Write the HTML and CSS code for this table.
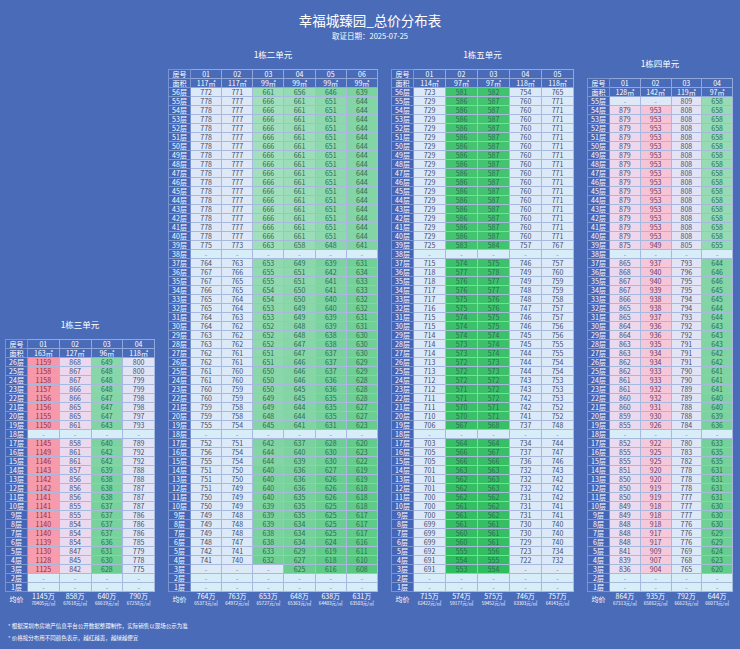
FILE: index.html
```html
<!DOCTYPE html>
<html lang="zh-CN">
<head>
<meta charset="utf-8">
<title>幸福城臻园_总价分布表</title>
<link rel="stylesheet" href="styles.css">
</head>
<body>
<header class="head">
  <h1 class="title">幸福城臻园_总价分布表</h1>
  <p class="date">取证日期：2025-07-25</p>
</header>
<main class="units" id="units"></main>
<footer class="notes">
  <p>* 根据深圳市房地产信息平台公开数据整理制作，实际销售以现场公示为准</p>
  <p>* 价格按分布用不同颜色表示，越红越贵，越绿越便宜</p>
</footer>
<script src="script.js"></script>
</body>
</html>
```

FILE: styles.css
```css
* { box-sizing: border-box; }
html, body { margin: 0; padding: 0; background: #4a6bb8; }
body {
  width: 740px;
  height: 649px;
  overflow: hidden;
  color: #fff;
  font-family: "Noto Sans CJK SC", "Noto Sans", sans-serif;
}
.head { padding-top: 10px; text-align: center; }
.title { margin: 0; font-size: 13.5px; line-height: 20px; font-weight: 400; }
.date { margin: 0; font-size: 7.5px; line-height: 12px; }

.units {
  display: flex;
  justify-content: space-between;
  align-items: flex-end;
  padding: 0 7px 0 5px;
  margin-top: 6px;
}
.unit-name {
  font-size: 8.5px;
  line-height: 13px;
  text-align: center;
  margin-bottom: 7.5px;
}
.grid {
  border-collapse: collapse;
  table-layout: fixed;
}
.u3 { width: 150px; }
.u2 { width: 210px; }
.u5 { width: 183px; }
.u4 { width: 146px; }
.grid col.lab-col { width: 22px; }

.grid tr { height: 9px; }
.grid td, .grid th {
  padding: 0;
  height: 9px;
  font-size: 7px;
  line-height: 8px;
  font-weight: normal;
  text-align: center;
  white-space: nowrap;
  overflow: hidden;
  border: 1px solid #a7b9dc;
  color: #434d6a;
}
.grid th.lab {
  background: #4566b6;
  color: #fff;
  border-color: #7a94cf;
}
.grid th.hd {
  background: #4a6bb8;
  color: #fff;
  border-color: #8fa7db;
}
.grid td.dash { color: #7b879e; }
.grid td.skip { background: #d7eef9; }
.grid td.empty { background: #dde9f7; }
.grid td.g { color: #2f6b52; }
.grid td.p { color: #5b3f68; }
.grid td.r { color: #9b2b3d; }

.grid tr.avg { height: 16.5px; }
.grid tr.avg th, .grid tr.avg td {
  height: 16.5px;
  background: #4a6bb8;
  color: #fff;
  border-color: #4a6bb8;
  border-top-color: #a7b9dc;
}
.avg .price { display: block; font-size: 7px; line-height: 8px; }
.avg .unit { display: block; font-size: 4.6px; line-height: 6px; }

.notes { padding: 12px 0 0 8px; }
.notes p { margin: 0; font-size: 5.5px; line-height: 12px; }
```

FILE: script.js
```js
(function () {
  var UNITS = [
    {
      name: '1栋三单元', cls: 'u3', top: 26,
      cols: ['01', '02', '03', '04'],
      areas: ['163㎡', '127㎡', '96㎡', '118㎡'],
      rows: [
        '26:1159 868 649 800', '25:1158 867 648 800', '24:1158 867 648 799',
        '23:1157 866 648 799', '22:1156 866 647 798', '21:1156 865 647 798',
        '20:1155 865 647 797', '19:1150 861 643 793', '18:-',
        '17:1145 858 640 789', '16:1149 861 642 792', '15:1146 861 642 792',
        '14:1143 857 639 788', '13:1142 856 638 788', '12:1142 856 638 787',
        '11:1141 856 638 787', '10:1141 855 637 787', '9:1141 855 637 786',
        '8:1140 854 637 786', '7:1140 854 637 786', '6:1139 854 636 785',
        '5:1130 847 631 779', '4:1128 845 630 778', '3:1125 842 628 775',
        '2:-', '1:-'
      ],
      avg: [['1145万', '70405元/㎡'], ['858万', '67618元/㎡'], ['640万', '66619元/㎡'], ['790万', '67258元/㎡']]
    },
    {
      name: '1栋二单元', cls: 'u2', top: 56,
      cols: ['01', '02', '03', '04', '05', '06'],
      areas: ['117㎡', '117㎡', '99㎡', '99㎡', '99㎡', '99㎡'],
      rows: [
        '56:772 771 661 656 646 639', '55-40:778 777 666 661 651 644',
        '39:775 773 663 658 648 641', '38:-',
        '37:764 763 653 649 639 631', '36:767 766 655 651 642 634',
        '35:767 765 655 651 641 633', '34:766 765 654 650 641 633',
        '33:765 764 654 650 640 632', '32:765 764 653 649 640 632',
        '31:764 763 653 649 639 631', '30:764 762 652 648 639 631',
        '29:763 762 652 648 638 630', '28:763 762 652 647 638 630',
        '27:762 761 651 647 637 630', '26:762 761 651 646 637 629',
        '25:761 760 650 646 637 629', '24:761 760 650 646 636 628',
        '23:760 759 650 645 636 628', '22:760 759 649 645 635 628',
        '21:759 758 649 644 635 627', '20:759 758 648 644 635 627',
        '19:755 754 645 641 631 623', '18:-',
        '17:752 751 642 637 628 620', '16:756 754 644 640 630 623',
        '15:755 754 644 639 630 622', '14:751 750 640 636 627 619',
        '13:751 750 640 636 626 619', '12:751 749 640 636 626 618',
        '11:750 749 640 635 626 618', '10:750 749 639 635 625 618',
        '9:749 748 639 635 625 617', '8:749 748 639 634 625 617',
        '7:749 748 638 634 625 617', '6:748 747 638 634 624 616',
        '5:742 741 633 629 619 611', '4:741 740 632 627 618 610',
        '3:- - - 625 616 608', '2:-', '1:-'
      ],
      avg: [['764万', '65373元/㎡'], ['763万', '64972元/㎡'], ['653万', '65727元/㎡'], ['648万', '65363元/㎡'], ['638万', '64403元/㎡'], ['631万', '63503元/㎡']]
    },
    {
      name: '1栋五单元', cls: 'u5', top: 56,
      cols: ['01', '02', '03', '04', '05'],
      areas: ['114㎡', '97㎡', '97㎡', '118㎡', '118㎡'],
      rows: [
        '56:723 581 582 754 765', '55-40:729 586 587 760 771',
        '39:725 583 584 757 767', '38:-',
        '37:715 574 575 746 757', '36:718 577 578 749 760',
        '35:718 576 577 749 759', '34:717 576 577 748 759',
        '33:717 575 576 748 758', '32:716 575 576 747 757',
        '31:715 574 575 746 757', '30:715 574 575 746 756',
        '29:714 574 574 745 756', '28:714 573 574 745 755',
        '27:714 573 574 744 755', '26:713 572 573 744 754',
        '25:713 572 573 744 754', '24:712 572 572 743 753',
        '23:712 571 572 743 753', '22:711 571 572 742 753',
        '21:711 570 571 742 752', '20:710 570 571 741 752',
        '19:706 567 568 737 748', '18:-',
        '17:703 564 564 734 744', '16:705 566 567 737 747',
        '15:705 566 566 736 746', '14:701 563 563 732 743',
        '13:701 562 563 732 742', '12:701 562 563 732 742',
        '11:700 562 562 731 742', '10:700 561 562 731 741',
        '9:700 561 562 731 741', '8:699 561 561 730 740',
        '7:699 560 561 730 740', '6:699 560 561 729 740',
        '5:692 555 556 723 734', '4:691 554 555 722 732',
        '3:691 553 554 - -', '2:-', '1:-'
      ],
      avg: [['715万', '62422元/㎡'], ['574万', '59177元/㎡'], ['575万', '59452元/㎡'], ['746万', '63303元/㎡'], ['757万', '64143元/㎡']]
    },
    {
      name: '1栋四单元', cls: 'u4', top: 55,
      cols: ['01', '02', '03', '04'],
      areas: ['128㎡', '142㎡', '119㎡', '97㎡'],
      rows: [
        '55:- - 809 658', '54-40:879 953 808 658',
        '39:875 949 805 655', '38:-',
        '37:865 937 793 644', '36:868 940 796 646',
        '35:867 940 795 646', '34:867 939 795 645',
        '33:866 938 794 645', '32:865 938 794 644',
        '31:865 937 793 644', '30:864 936 792 643',
        '29:864 936 792 643', '28:863 935 791 643',
        '27:863 934 791 642', '26:862 934 791 642',
        '25:862 933 790 641', '24:861 933 790 641',
        '23:861 932 789 641', '22:860 932 789 640',
        '21:860 931 788 640', '20:859 930 788 639',
        '19:855 926 784 636', '18:-',
        '17:852 922 780 633', '16:855 925 783 635',
        '15:855 925 782 635', '14:851 920 778 631',
        '13:850 920 778 631', '12:850 919 778 631',
        '11:850 919 777 631', '10:849 918 777 630',
        '9:849 918 777 630', '8:848 918 776 630',
        '7:848 917 776 629', '6:848 917 776 629',
        '5:841 909 769 624', '4:839 907 768 623',
        '3:836 904 765 620', '2:-', '1:-'
      ],
      avg: [['864万', '67313元/㎡'], ['935万', '65862元/㎡'], ['792万', '66623元/㎡'], ['644万', '66073元/㎡']]
    }
  ];

  var STOPS = [
    [550, [46, 188, 94]],
    [590, [70, 196, 114]],
    [620, [98, 204, 138]],
    [645, [132, 213, 166]],
    [670, [168, 225, 194]],
    [690, [220, 233, 248]],
    [772, [220, 233, 248]],
    [790, [226, 228, 246]],
    [810, [228, 226, 246]],
    [850, [234, 219, 240]],
    [880, [238, 214, 236]],
    [905, [245, 202, 220]],
    [950, [246, 196, 216]],
    [1100, [247, 162, 178]],
    [1160, [246, 152, 170]]
  ];

  function colorFor(v) {
    if (v <= STOPS[0][0]) return STOPS[0][1];
    for (var i = 1; i < STOPS.length; i++) {
      if (v <= STOPS[i][0]) {
        var a = STOPS[i - 1], b = STOPS[i];
        var t = (v - a[0]) / (b[0] - a[0]);
        return [0, 1, 2].map(function (k) { return Math.round(a[1][k] + (b[1][k] - a[1][k]) * t); });
      }
    }
    return STOPS[STOPS.length - 1][1];
  }

  function textClass(v) {
    if (v < 690) return 'g';
    if (v >= 1000) return 'r';
    if (v >= 900) return 'p';
    return '';
  }

  function parseRows(unit) {
    var map = {};
    unit.rows.forEach(function (line) {
      var parts = line.split(':');
      var range = parts[0].split('-');
      var hi = parseInt(range[0], 10);
      var lo = range.length > 1 ? parseInt(range[1], 10) : hi;
      var vals = parts[1] === '-' ? null : parts[1].split(' ');
      for (var f = hi; f >= lo; f--) map[f] = vals;
    });
    return map;
  }

  function el(tag, cls, text) {
    var e = document.createElement(tag);
    if (cls) e.className = cls;
    if (text !== undefined) e.textContent = text;
    return e;
  }

  var root = document.getElementById('units');
  UNITS.forEach(function (unit) {
    var box = el('section', 'unit');
    box.appendChild(el('div', 'unit-name', unit.name));
    var table = el('table', 'grid ' + unit.cls);
    var cg = el('colgroup');
    cg.appendChild(el('col', 'lab-col'));
    unit.cols.forEach(function () { cg.appendChild(el('col')); });
    table.appendChild(cg);

    var thead = el('thead');
    var r1 = el('tr');
    r1.appendChild(el('th', 'lab', '房号'));
    unit.cols.forEach(function (c) { r1.appendChild(el('th', 'hd', c)); });
    var r2 = el('tr');
    r2.appendChild(el('th', 'lab', '面积'));
    unit.areas.forEach(function (a) { r2.appendChild(el('th', 'hd', a)); });
    thead.appendChild(r1);
    thead.appendChild(r2);
    table.appendChild(thead);

    var tbody = el('tbody');
    var map = parseRows(unit);
    for (var f = unit.top; f >= 1; f--) {
      var tr = el('tr');
      tr.appendChild(el('th', 'lab', f + '层'));
      var vals = map[f];
      for (var i = 0; i < unit.cols.length; i++) {
        var td;
        if (!vals) {
          td = el('td', 'dash skip', '-');
        } else if (vals[i] === '-') {
          td = el('td', 'dash empty', '-');
        } else {
          var v = parseInt(vals[i], 10);
          td = el('td', textClass(v), vals[i]);
          var c = colorFor(v);
          td.style.background = 'rgb(' + c.join(',') + ')';
        }
        tr.appendChild(td);
      }
      tbody.appendChild(tr);
    }
    var ar = el('tr', 'avg');
    ar.appendChild(el('th', 'lab', '均价'));
    unit.avg.forEach(function (a) {
      var td = el('td');
      td.appendChild(el('span', 'price', a[0]));
      td.appendChild(el('span', 'unit', a[1]));
      ar.appendChild(td);
    });
    tbody.appendChild(ar);
    table.appendChild(tbody);
    box.appendChild(table);
    root.appendChild(box);
  });
})();
```
